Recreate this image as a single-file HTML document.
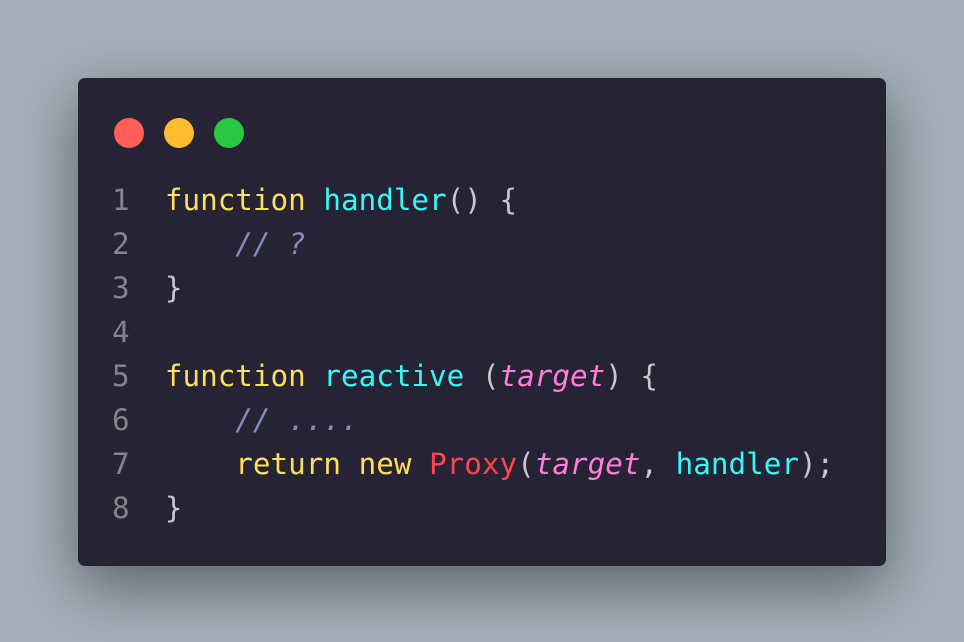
<!DOCTYPE html>
<html><head><style>
html,body{margin:0;padding:0}
body{width:964px;height:642px;background:#a4afbb;position:relative;overflow:hidden}
.win{position:absolute;left:78px;top:78px;width:808px;height:488px;background:#262335;border-radius:7px;box-shadow:0 20px 60px rgba(0,0,0,.45)}
.dot{position:absolute;top:40px;width:30px;height:30px;border-radius:50%}
pre{position:absolute;left:34px;top:100px;margin:0;font-family:"DejaVu Sans Mono","Liberation Mono",monospace;font-size:29.25px;line-height:44px;color:#c8c6d0}
.n{color:#85838f}.k{color:#fede5d}.f{color:#36f9f6}.c{color:#848bbd;font-style:italic}.p{color:#ff7edb;font-style:italic}.r{color:#fe4450}
</style></head><body>
<div class="win">
<div class="dot" style="left:36px;background:#ff5f57"></div>
<div class="dot" style="left:86px;background:#febc2e"></div>
<div class="dot" style="left:136px;background:#28c840"></div>
<pre><span class="n">1</span>  <span class="k">function</span> <span class="f">handler</span>() {
<span class="n">2</span>      <span class="c">// ?</span>
<span class="n">3</span>  }
<span class="n">4</span>
<span class="n">5</span>  <span class="k">function</span> <span class="f">reactive</span> (<span class="p">target</span>) {
<span class="n">6</span>      <span class="c">// ....</span>
<span class="n">7</span>      <span class="k">return</span> <span class="k">new</span> <span class="r">Proxy</span>(<span class="p">target</span>, <span class="f">handler</span>);
<span class="n">8</span>  }</pre>
</div>
</body></html>
